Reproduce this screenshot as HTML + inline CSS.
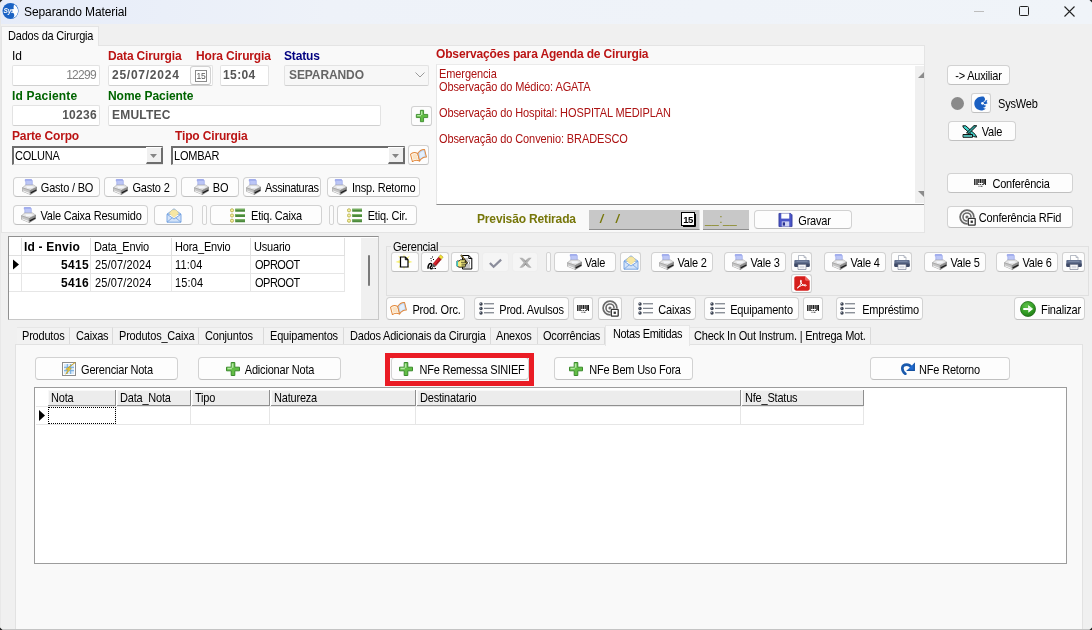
<!DOCTYPE html><html><head><meta charset="utf-8"><title>Separando Material</title><style>
*{box-sizing:border-box;margin:0;padding:0}
html,body{width:1092px;height:630px;overflow:hidden;background:#f0f0f0}
body{will-change:transform;font-family:"Liberation Sans",sans-serif;font-size:11px;letter-spacing:-0.2px;color:#000;position:relative}
.a{position:absolute;white-space:nowrap}
.t,.btn span{display:inline-block;transform:translateY(.5px) scaleY(1.13)}
.cell .t,.hd .t{transform:translateY(-.4px) scaleY(1.13)}
.tab .t,.st .t{transform:translateY(-.2px) scaleY(1.13)}
.b{font-weight:bold;font-size:12px;letter-spacing:-0.15px}
.red{color:#bb1414}.grn{color:#006400}.navy{color:#000080}.olv{color:#77770a}
.btn{position:absolute;background:#fdfdfd;border:1px solid #d2d2d2;border-bottom-color:#c0c0c0;border-radius:4px;white-space:nowrap;display:flex;align-items:center;justify-content:center;font-size:11px}
.btn svg{flex:none}
.inp{position:absolute;background:#fff;border:1px solid #e3e3e3;border-bottom-color:#d0d0d0;border-radius:2px;white-space:nowrap;line-height:17px;font-size:12px;letter-spacing:0}
.cmb{position:absolute;background:#fff;border:1px solid #e3e3e3;border-top:2px solid #6d6d6d;border-left:2px solid #6d6d6d;white-space:nowrap;line-height:15px;font-size:11px}
.sep{position:absolute;width:4px;border:1px solid #d4d4d4;border-radius:2px;background:#fbfbfb}
.tab{position:absolute;top:327px;height:17px;line-height:16px;padding-left:7px;border-right:1px solid #dadada;border-top:1px solid #e6e6e6;white-space:nowrap;background:#f2f2f2}
.hd{padding-top:1px;position:absolute;background:#f0f0f0;border-right:1px solid #a0a0a0;border-bottom:1px solid #a0a0a0;white-space:nowrap;padding-left:2px;line-height:16px}
.cell{padding-top:1px;position:absolute;border-right:1px solid #e6e6e6;border-bottom:1px solid #e6e6e6;white-space:nowrap;padding-left:3px;line-height:17px;background:#fff}
</style></head><body>
<svg width="0" height="0" style="position:absolute"><defs>
<symbol id="prn" viewBox="0 0 15 16"><path d="M3.200.6h6.300l.8 1v5.800H3.800V2.200h-.6z" fill="#bcc6f6" stroke="#94a1ea" stroke-width=".6" stroke-linejoin="round"/><path d="M3.200.6h6.300l.6 1H3.200z" fill="#8f9ce8"/><path d="M.3 8.800l3.500-2.900h7.600l3.400 2.300-6.500 3.200z" fill="#e4e4e4" stroke="#9c9c9c" stroke-width=".5" stroke-linejoin="round"/><path d="M4.200 7.200h6.100l1.300 1.400-6.200.7z" fill="#f5f7fc"/><path d="M.3 8.800l8 2.600v4.100l-8-3.300z" fill="#c6c6c6" stroke="#8c8c8c" stroke-width=".5" stroke-linejoin="round"/><path d="M1 11.400l6.600 2.500v1L1 12.300z" fill="#fbfbfb"/><path d="M8.300 11.400l6.500-3.200v3.500l-6.500 3.800z" fill="#909090" stroke="#707070" stroke-width=".5" stroke-linejoin="round"/><path d="M8.800 13.900l5.500-2.900" stroke="#1c1c1c" stroke-width="1.300"/></symbol>
<symbol id="prn2" viewBox="0 0 16 15"><path d="M4.500.5h5.500l2 2V6H4.500z" fill="#fff" stroke="#9aa0ad" stroke-width=".7"/><path d="M10 .5v2h2" fill="#d5d9e2" stroke="#9aa0ad" stroke-width=".6"/><path d="M1.500 5h13c.8 0 1.200.5 1.200 1.200v4.600c0 .7-.5 1.200-1.200 1.200h-13C.7 12 .3 11.500.3 10.800V6.200C.3 5.500.7 5 1.500 5z" fill="#5f6d8c"/><path d="M.3 8.500h15.400v2.300c0 .7-.5 1.200-1.200 1.200h-13C.7 12 .3 11.500.3 10.800z" fill="#3f4a66"/><path d="M2.500 6.300h11" stroke="#8c98b4" stroke-width=".8"/><path d="M4 9.500h8v5H4z" fill="#fff" stroke="#7b8296" stroke-width=".7"/><path d="M5.500 11.300h5M5.500 12.800h5" stroke="#b7bccb" stroke-width=".7"/></symbol>
<symbol id="lstg" viewBox="0 0 15 15"><circle cx="2" cy="2.300" r="1.600" fill="#f6f0a0" stroke="#a8a030" stroke-width=".7"/><circle cx="2" cy="7.500" r="1.600" fill="#f6f0a0" stroke="#a8a030" stroke-width=".7"/><circle cx="2" cy="12.700" r="1.600" fill="#f6f0a0" stroke="#a8a030" stroke-width=".7"/><path d="M5.200.8H15v3H5.200zM5.200 6H15v3H5.200zM5.200 11.200H15v3H5.200z" fill="#4c8a3c"/><path d="M5.200.8H15v1H5.200zM5.200 6H15v1H5.200zM5.200 11.200H15v1H5.200z" fill="#7fb86a"/></symbol>
<symbol id="lstd" viewBox="0 0 15 13"><circle cx="2" cy="2" r="1.700" fill="#3d4452"/><circle cx="2" cy="6.500" r="1.700" fill="#3d4452"/><circle cx="2" cy="11" r="1.700" fill="#3d4452"/><circle cx="1.500" cy="1.500" r=".6" fill="#aab2c2"/><circle cx="1.500" cy="6" r=".6" fill="#aab2c2"/><circle cx="1.500" cy="10.500" r=".6" fill="#aab2c2"/><path d="M5 1.800h10M5 6.300h10M5 10.800h10" stroke="#4c5260" stroke-width=".9"/></symbol>
<symbol id="mail" viewBox="0 0 16 15"><path d="M1 6.200L8 .8l7 5.400z" fill="#dbe8fa" stroke="#6f9fe0" stroke-width=".9" stroke-linejoin="round"/><path d="M3.500 5.500C4.500 2.500 6.500 1.800 8 1.800s3.500.7 4.500 3.700L8 9.500z" fill="#f7e7a3" stroke="#e3cd78" stroke-width=".4"/><path d="M1 6.200v8h14v-8L8 11z" fill="#d3e3f9" stroke="#6f9fe0" stroke-width=".9" stroke-linejoin="round"/><path d="M1 14.200l5.300-4.500M15 14.200L9.700 9.700" stroke="#6f9fe0" stroke-width=".8" fill="none"/></symbol>
<symbol id="plus" viewBox="0 0 16 16"><path d="M6.200 1.500h3.600v4.700h4.700v3.600H9.800v4.700H6.200V9.800H1.500V6.200h4.700z" fill="#62bd45" stroke="#3a8a2c" stroke-width="1" stroke-linejoin="round"/><path d="M6.800 2.500h1.600v4.300H6.800zM2.500 6.800h4.300v1.400H2.500z" fill="#b4e8a4"/></symbol>
<symbol id="book" viewBox="0 0 17 13"><g transform="rotate(-14 8.500 6.500) translate(.3 .3) scale(.96)"><path d="M.8 3.200Q4.500 1 8.300 4.300V12.300Q4.500 9.500.8 11.200z" fill="#fff7ea" stroke="#e2873a" stroke-width="1" stroke-linejoin="round"/><path d="M8.300 4.300Q12 .6 16.200 2V10Q12 8.800 8.300 12.300z" fill="#bcd6f5" stroke="#e2873a" stroke-width="1" stroke-linejoin="round"/><path d="M2.300 4.200Q5 3.200 7 5.300V10.300Q5 8.600 2.300 9.400z" fill="#fbe3c4"/><path d="M9.800 5Q12.500 2.500 14.800 3.200V8.600Q12.500 8.200 9.800 10.300z" fill="#e3effc"/></g></symbol>
<symbol id="flop" viewBox="0 0 16 16"><path d="M1 1h12.500L15 2.500V15H1z" fill="#4a55c8" stroke="#2a3190" stroke-width=".8"/><path d="M3.500 1h8.500v5.500H3.500z" fill="#fff"/><path d="M4 9.500h8V15H4z" fill="#cfd3f3"/><path d="M5 10.500h2.500v3.500H5z" fill="#2a3190"/></symbol>
<symbol id="barc" viewBox="0 0 12 8"><path d="M.8 0v6M3 0v6M10 0v6M11.600 0v6" stroke="#1a1a1a" stroke-width="1.400"/><path d="M4.800 0v4M6.500 0v4M8.200 0v4" stroke="#1a1a1a" stroke-width="1.200"/><path d="M4.200 5.500h1.200M6 5.500h1M7.800 5.500h1.200M4.500 7.300h1M6.500 7.300h2" stroke="#444" stroke-width="1"/></symbol>
<symbol id="rfid" viewBox="0 0 17 17"><circle cx="8" cy="8" r="6.900" fill="none" stroke="#6a6a6a" stroke-width="1.700"/><circle cx="8" cy="8" r="4" fill="none" stroke="#6a6a6a" stroke-width="1.600"/><circle cx="8" cy="8" r="1.600" fill="#6a6a6a"/><rect x="8.500" y="8.500" width="8" height="8" rx=".8" fill="#fff"/><rect x="9.300" y="9.300" width="6.900" height="6.900" rx=".6" fill="#fff" stroke="#333" stroke-width="1.300"/><rect x="11.600" y="11.600" width="2.300" height="2.300" fill="#333"/></symbol>
<symbol id="go" viewBox="0 0 16 16"><defs><radialGradient id="gg" cx=".4" cy=".3" r=".8"><stop offset="0" stop-color="#5fc14a"/><stop offset=".6" stop-color="#2f9a22"/><stop offset="1" stop-color="#1d6f14"/></radialGradient></defs><circle cx="8" cy="8" r="7.500" fill="url(#gg)" stroke="#1e6b16" stroke-width=".8"/><path d="M3.300 6.900h5V4.200L13 8l-4.700 3.800V9.100h-5z" fill="#fff"/><path d="M3.300 6.900h5V4.200L13 8z" fill="#e4f6df"/></symbol>
<symbol id="redo" viewBox="0 0 15 13"><path d="M5.300 11.800C1.300 8.500 1 2.600 6.800 2.600c2.200 0 3.400 1 4.400 2.500" fill="none" stroke="#1a5aad" stroke-width="2.700" stroke-linecap="round"/><path d="M14.800.5V9H6.300z" fill="#1f6ad0"/><path d="M14.800 9H6.300l1.500-1.300h5.800V2.200L14.800.5z" fill="#15509f"/></symbol>
<symbol id="note" viewBox="0 0 14 14"><rect x=".5" y=".5" width="13" height="13" fill="#fdfdfd" stroke="#8c8c8c"/><rect x="2" y="2" width="10" height="10" fill="#d9eafa"/><path d="M2 5.300h10M2 8.700h10M5.300 2v10M8.700 2v10" stroke="#6fa9de" stroke-width="1"/><path d="M13.300.3L6 6.200h3.200L3.800 12.300l2.600-5H3.800z" fill="#f7dc3c" stroke="#c99a10" stroke-width=".6" stroke-linejoin="round"/></symbol>
<symbol id="pdf" viewBox="0 0 16 15"><path d="M2.500.3H11l4.700 4.500v7.700c0 1.300-.9 2.200-2.200 2.200h-11C1.200 14.700.3 13.800.3 12.500v-10C.3 1.200 1.200.3 2.500.3z" fill="#d61f1c"/><path d="M11 .3l4.700 4.500h-3.200c-.9 0-1.500-.6-1.500-1.500z" fill="#f0625e"/><path d="M3.300 12c1.600-.6 3.600-3.600 4.100-6.400.3-1.700-.9-2-1-.7-.1 1.900 2.400 4.700 4.800 5 1.400.2 1.500-1 .2-1.100-2.400-.2-5.900 1.300-8.100 3.200z" fill="none" stroke="#fff" stroke-width="1"/></symbol>
<symbol id="newd" viewBox="0 0 18 16"><path d="M9 0l1.300 4.500L15 1.500l-2.700 4.200L17.500 8l-5.200 1.500 2.200 4.500-4.500-2.500L9 16l-1-4.500L3.500 14l2.200-4.500L.5 8l5.200-2.300L3 1.500l4.700 3z" fill="#f9f27a"/><path d="M5.500 3h4.800L13 5.700V13H5.500z" fill="#fff" stroke="#000" stroke-width="1.200" stroke-linejoin="miter"/><path d="M10.300 3v2.700H13" fill="none" stroke="#000" stroke-width="1"/></symbol>
<symbol id="edt" viewBox="0 0 18 16"><path d="M14.500.8l2.700 2.200-2 2.500-2.700-2.200z" fill="#f3e23a" stroke="#8a7a10" stroke-width=".4"/><path d="M12.500 3.300l2.700 2.200-5.500 6.500L7 9.800z" fill="#d8202a" stroke="#7a1015" stroke-width=".5"/><path d="M12.800 4.500l1.300 1-4.600 5.400" stroke="#8e0f16" stroke-width=".9" fill="none"/><path d="M7 9.800l2.700 2.200-1 1.200-2.600-.4z" fill="#555"/><path d="M2.200 14.800c-.6-2.300.6-5.300 2.400-5.300 1.900 0 1.300 2.300 0 3.300-1.300 1.100.4 2.400 2 1.500" fill="none" stroke="#000" stroke-width="1.500"/><path d="M6.300 13.300l1 1.600M8.500 14.500h1.500M4.500 4.500h1M6 3h1M4.800 6.800h1M7 5.500h1" stroke="#000" stroke-width="1"/></symbol>
<symbol id="cpy" viewBox="0 0 18 16"><path d="M6.500 1.500h6.300l3 3V15H6.500z" fill="#fff" stroke="#000" stroke-width="1"/><path d="M12.800 1.500v3h3" fill="none" stroke="#000" stroke-width="1"/><path d="M8.500 5h3M8.500 7h5.500M11 9h3M9.500 11h4.500M8.500 13h5.500" stroke="#222" stroke-width="1" stroke-dasharray="1 1"/><path d="M5.500.8l6 8-.8.700-6-8z" fill="#e9c23a" stroke="#000" stroke-width=".6"/><path d="M1 7h2l1.500-1.200h4.500l.8 1.200-1 1 1.500.8v1.500l-1.200.5.400 1.200-1 1.200H3L1 12z" fill="#f4ea7c" stroke="#000" stroke-width=".8" stroke-linejoin="round"/><path d="M.5 7h1.500v5.500H.5z" fill="#3fc7c0"/><path d="M5 8.300h4M5.500 10.200h4M5.500 12h3" stroke="#000" stroke-width=".6"/></symbol>
<symbol id="chk" viewBox="0 0 16 16"><path d="M2 8.500l4 4 8-7.500" fill="none" stroke="#8b8d9b" stroke-width="2.400"/></symbol>
<symbol id="xx" viewBox="0 0 16 16"><path d="M1.500 3h3L8 6.500 11.500 3h3L10 8.200l4.500 5.300h-3L8 9.800 4.500 13.500h-3L6 8.200z" fill="#b2b2b2"/><path d="M5 3l3 3 3-3-3 4.500zM5 13.500l3-3.200 3 3.200-3-5z" fill="#8c8c8c"/></symbol>
<symbol id="cal" viewBox="0 0 12 12"><rect x=".5" y=".5" width="11" height="11" fill="#fff" stroke="#8a8a8a" stroke-width="1"/><text x="6" y="9.200" font-size="8.500" text-anchor="middle" font-family="Liberation Sans" fill="#555" letter-spacing="-.3">15</text></symbol>
<symbol id="valei" viewBox="0 0 16 13"><path d="M.8.800h3l9.500 8.700 1.500 2.700-3-.6L1.500 2.800z" fill="#3fd0c8" stroke="#000" stroke-width=".9" stroke-linejoin="round"/><path d="M12 .6l2.800.2L7 8.500 4.500 7.800z" fill="#2aa39c" stroke="#000" stroke-width=".9" stroke-linejoin="round"/><path d="M1 9.500h9.500v2.800H1z" fill="#7fe3dc" stroke="#000" stroke-width=".9"/><path d="M2 10.900h7.500" stroke="#1d8f88" stroke-width=".8"/></symbol>
<symbol id="sysw" viewBox="0 0 14 15"><path d="M9.500.6C5 -.3 .5 2.800.3 7.300c-.2 4.700 4 8 8.700 7 1.500-.4 2.200-1 2.800-1.700-1.300.1-2.200-.3-2.600-1 1.300-.3 2.500-1 3-2.200-1 .2-1.700 0-2.200-.4 1.600-.6 2.500-1.700 3.500-1.400C13.600 6.800 13 6.300 12.500 6c.7-.7.800-1.500.6-2.200-.9.900-2 1.200-2.800.9.900-.9 1.300-2.200-.8-4.100z" fill="#1b60c2"/><circle cx="8.500" cy="7.300" r="1.400" fill="#fff"/><path d="M9.500 5.800l2-.8M9.800 8.300l1.600.5" stroke="#fff" stroke-width=".8"/></symbol>
</defs></svg>
<div class="a" style="left:0;top:0;width:1092px;height:24px;background:linear-gradient(90deg,#e6ecf9 0,#eef2f9 30%,#f0f4f9 100%)"></div>
<svg class="a" style="left:2px;top:2px" width="18" height="18" viewBox="0 0 18 18"><circle cx="8.500" cy="9" r="8" fill="#1b63c4"/><path d="M12 2.500c2.500 1.500 4.500 4 4 7.500s-3 5.500-5 6c2-2 1.500-4 0-5.500s1.500-3 .5-5z" fill="#fff"/><text x="1.500" y="11" font-size="6.500" font-weight="bold" font-family="Liberation Sans" fill="#fff" font-style="italic">Sys</text></svg>
<div class="a " style="left:24px;top:5px;font-size:12px;letter-spacing:-0.1px;line-height:15px">Separando Material</div>
<div class="a" style="left:974px;top:11px;width:10px;height:1px;background:#bdbdbd"></div>
<div class="a" style="left:1019px;top:6px;width:10px;height:10px;border:1px solid #222;border-radius:1.500px"></div>
<svg class="a" style="left:1064px;top:6px" width="11" height="11" viewBox="0 0 11 11"><path d="M.5.5l10 10M10.500.5l-10 10" stroke="#222" stroke-width="1.100"/></svg>
<div class="a" style="left:1px;top:45px;width:924px;height:188px;background:#f9f9f9;border:1px solid #e4e4e4"></div>
<div class="a" style="left:1px;top:26px;width:98px;height:20px;background:#f9f9f9;border:1px solid #e4e4e4;border-bottom:none"></div>
<div class="a " style="left:8px;top:28px;line-height:14px"><span class="t">Dados da Cirurgia</span></div>
<div class="a " style="left:12px;top:49px;font-size:12px;letter-spacing:0;line-height:14px">Id</div>
<div class="a b red" style="left:108px;top:49px;line-height:14px">Data Cirurgia</div>
<div class="a b red" style="left:196px;top:49px;line-height:14px">Hora Cirurgia</div>
<div class="a b navy" style="left:284px;top:49px;line-height:14px">Status</div>
<div class="a b red" style="left:436px;top:47px;line-height:14px">Observações para Agenda de Cirurgia</div>
<div class="inp" style="left:12px;top:65px;width:88px;height:21px;line-height:19px;text-align:right;padding-right:2px;color:#808080;font-size:12px;letter-spacing:-0.7px;padding-right:3px">12299</div>
<div class="inp" style="left:108px;top:65px;width:105px;height:21px;line-height:19px;padding-left:3px;color:#555;font-weight:bold;letter-spacing:.75px">25/07/2024</div>
<div class="btn" style="left:190px;top:66px;width:21px;height:19px;border-radius:3px"><svg width="12" height="12" style=""><use href="#cal"/></svg></div>
<div class="inp" style="left:220px;top:65px;width:49px;height:21px;line-height:19px;padding-left:2px;color:#555;font-weight:bold;letter-spacing:.4px">15:04</div>
<div class="inp" style="left:284px;top:65px;width:145px;height:21px;line-height:19px;padding-left:4px;color:#666;font-weight:bold;letter-spacing:-.1px;background:#f7f7f7">SEPARANDO</div>
<svg class="a" style="left:415px;top:72px" width="10" height="6" viewBox="0 0 10 6"><path d="M.5.5L5 5 9.500.5" fill="none" stroke="#9a9a9a" stroke-width="1"/></svg>
<div class="a b grn" style="left:12px;top:89px;line-height:14px;letter-spacing:.18px">Id Paciente</div>
<div class="a b grn" style="left:108px;top:89px;line-height:14px;letter-spacing:-.05px">Nome Paciente</div>
<div class="inp" style="left:12px;top:105px;width:88px;height:21px;text-align:right;padding-right:2px;color:#555;font-weight:bold;line-height:19px;letter-spacing:.3px">10236</div>
<div class="inp" style="left:108px;top:105px;width:273px;height:21px;padding-left:3px;color:#555;font-weight:bold;letter-spacing:.2px;line-height:19px">EMULTEC</div>
<div class="btn" style="left:411px;top:106px;width:21px;height:20px;border-radius:3px"><svg width="14" height="14" style=""><use href="#plus"/></svg></div>
<div class="a b red" style="left:12px;top:129px;line-height:14px">Parte Corpo</div>
<div class="a b red" style="left:175px;top:129px;line-height:14px">Tipo Cirurgia</div>
<div class="cmb" style="left:12px;top:146px;width:151px;height:19px;padding-left:1px"><span class="t">COLUNA</span></div>
<div class="cmb" style="left:171px;top:146px;width:234px;height:19px;padding-left:1px"><span class="t">LOMBAR</span></div>
<div class="a" style="left:146px;top:147px;width:17px;height:17px;background:#f0f0f0;border:1px solid #fff;border-right:2px solid #6d6d6d;border-bottom:2px solid #6d6d6d"></div>
<svg class="a" style="left:150px;top:154px" width="7" height="4" viewBox="0 0 7 4"><path d="M0 0h7L3.500 4z" fill="#858585"/></svg>
<div class="a" style="left:388px;top:147px;width:17px;height:17px;background:#f0f0f0;border:1px solid #fff;border-right:2px solid #6d6d6d;border-bottom:2px solid #6d6d6d"></div>
<svg class="a" style="left:392px;top:154px" width="7" height="4" viewBox="0 0 7 4"><path d="M0 0h7L3.500 4z" fill="#858585"/></svg>
<div class="btn" style="left:408px;top:145px;width:21px;height:20px;border-radius:3px"><svg width="17" height="13" style=""><use href="#book"/></svg></div>
<div class="btn" style="left:13px;top:177px;width:87px;height:20px;"><svg width="15" height="16" style="margin-left:2px;margin-right:4px"><use href="#prn"/></svg><span>Gasto / BO</span></div>
<div class="btn" style="left:104px;top:177px;width:73px;height:20px;"><svg width="15" height="16" style="margin-left:2px;margin-right:4px"><use href="#prn"/></svg><span>Gasto 2</span></div>
<div class="btn" style="left:181px;top:177px;width:58px;height:20px;"><svg width="15" height="16" style="margin-left:2px;margin-right:4px"><use href="#prn"/></svg><span>BO</span></div>
<div class="btn" style="left:243px;top:177px;width:78px;height:20px;justify-content:flex-start;padding-left:2px"><svg width="15" height="16" style="margin-right:4px"><use href="#prn"/></svg><span style="letter-spacing:-.35px">Assinaturas</span></div>
<div class="btn" style="left:327px;top:177px;width:93px;height:20px;justify-content:flex-start;padding-left:4px"><svg width="15" height="16" style="margin-right:5px"><use href="#prn"/></svg><span>Insp. Retorno</span></div>
<div class="btn" style="left:13px;top:205px;width:135px;height:20px;"><svg width="15" height="16" style="margin-left:2px;margin-right:4px"><use href="#prn"/></svg><span>Vale Caixa Resumido</span></div>
<div class="btn" style="left:154px;top:205px;width:39px;height:20px;"><svg width="16" height="15" style=""><use href="#mail"/></svg></div>
<div class="sep" style="left:202px;top:205px;height:20px;width:5px"></div>
<div class="btn" style="left:210px;top:205px;width:112px;height:20px;"><svg width="15" height="15" style="margin-right:6px"><use href="#lstg"/></svg><span>Etiq. Caixa</span></div>
<div class="sep" style="left:329px;top:205px;height:20px;width:5px"></div>
<div class="btn" style="left:337px;top:205px;width:80px;height:20px;"><svg width="15" height="15" style="margin-right:6px"><use href="#lstg"/></svg><span>Etiq. Cir.</span></div>
<div class="a" style="left:436px;top:64px;width:488px;height:141px;background:#fff;border-top:1px solid #ebebeb;border-left:1px solid #e6e6e6;border-bottom:1px solid #8c8c8c"></div>
<div class="a" style="left:439px;top:67px;line-height:13px;color:#ac1212;letter-spacing:-0.1px"><span class="t">Emergencia</span></div>
<div class="a" style="left:439px;top:80px;line-height:13px;color:#ac1212;letter-spacing:-0.1px"><span class="t">Observação do Médico: AGATA</span></div>
<div class="a" style="left:439px;top:106px;line-height:13px;color:#ac1212;letter-spacing:-0.1px"><span class="t">Observação do Hospital: HOSPITAL MEDIPLAN</span></div>
<div class="a" style="left:439px;top:132px;line-height:13px;color:#ac1212;letter-spacing:-0.1px"><span class="t">Observação do Convenio: BRADESCO</span></div>
<div class="a" style="left:915px;top:66px;width:9px;height:137px;background:#f0f0f0"></div>
<svg class="a" style="left:918px;top:72px" width="6" height="6" viewBox="0 0 6 6"><path d="M0 6h6V0z" fill="#8c8c8c"/></svg>
<svg class="a" style="left:918px;top:191px" width="6" height="6" viewBox="0 0 6 6"><path d="M0 0h6v6z" fill="#8c8c8c"/></svg>
<div class="a b olv" style="left:477px;top:212px;line-height:14px">Previsão Retirada</div>
<div class="a" style="left:589px;top:210px;width:111px;height:20px;background:#c8c8c8;border-bottom:1px solid #8e8e8e;border-right:1px solid #dedede"></div>
<div class="a b olv" style="left:600px;top:212px;line-height:14px;font-style:italic;letter-spacing:.6px">/&nbsp;&nbsp;&nbsp;/</div>
<svg class="a" style="left:681px;top:212px" width="15" height="15" viewBox="0 0 15 15"><rect x=".5" y=".5" width="13" height="13" fill="#fff" stroke="#000"/><path d="M14.500 2v12.500H2" fill="none" stroke="#000"/><text x="7" y="11" font-size="9.500" font-weight="bold" text-anchor="middle" font-family="Liberation Sans" fill="#000" letter-spacing="-.5">15</text></svg>
<div class="a" style="left:703px;top:210px;width:46px;height:20px;background:#c8c8c8;border-bottom:1px solid #8e8e8e"></div>
<div class="a olv" style="left:705px;top:212px;line-height:14px;font-size:12px;letter-spacing:.4px;color:#8a8a2a">__:__</div>
<div class="btn" style="left:754px;top:210px;width:98px;height:19px;padding-left:3px"><svg width="15" height="16" style="margin-right:5px"><use href="#flop"/></svg><span>Gravar</span></div>
<div class="btn" style="left:947px;top:65px;width:63px;height:20px;"><span>-&gt; Auxiliar</span></div>
<div class="a" style="left:951px;top:97px;width:13px;height:13px;border-radius:50%;background:#8a8a8a"></div>
<div class="btn" style="left:971px;top:93px;width:20px;height:20px;border-radius:3px"><svg width="14" height="15" style=""><use href="#sysw"/></svg></div>
<div class="a " style="left:998px;top:97px;line-height:13px"><span class="t">SysWeb</span></div>
<div class="btn" style="left:948px;top:121px;width:68px;height:20px;"><svg width="16" height="13" style="margin-right:4px"><use href="#valei"/></svg><span>Vale</span></div>
<div class="btn" style="left:947px;top:173px;width:126px;height:20px;padding-left:4px"><svg width="12" height="8" style="margin-right:6px"><use href="#barc"/></svg><span>Conferência</span></div>
<div class="btn" style="left:947px;top:206px;width:126px;height:22px;"><svg width="17" height="17" style="margin-right:3px"><use href="#rfid"/></svg><span>Conferência RFid</span></div>
<div class="a" style="left:8px;top:236px;width:371px;height:84px;background:#fff;border:1px solid #8f8f8f;border-right-color:#c8c8c8;border-bottom-color:#c8c8c8"></div>
<div class="a" style="left:361px;top:238px;width:17px;height:81px;background:#f0f0f0"></div>
<div class="a" style="left:368px;top:255px;width:2px;height:31px;background:#7a7a7a;border-radius:1px"></div>
<div class="hd" style="left:9px;top:238px;width:13px;height:18px;background:#fff;border-color:#e0e0e0;"></div>
<div class="hd" style="left:22px;top:238px;width:69px;height:18px;background:#fff;border-color:#e0e0e0;font-weight:bold;font-size:12px;letter-spacing:.2px">Id - Envio</div>
<div class="hd" style="left:91px;top:238px;width:81px;height:18px;background:#fff;border-color:#e0e0e0;padding-left:3px"><span class="t">Data_Envio</span></div>
<div class="hd" style="left:172px;top:238px;width:79px;height:18px;background:#fff;border-color:#e0e0e0;padding-left:3px"><span class="t">Hora_Envio</span></div>
<div class="hd" style="left:251px;top:238px;width:94px;height:18px;background:#fff;border-color:#e0e0e0;padding-left:3px"><span class="t">Usuario</span></div>
<div class="cell" style="left:9px;top:256px;width:13px;height:18px;background:#fff"></div>
<div class="cell" style="left:22px;top:256px;width:69px;height:18px;font-weight:bold;font-size:12px;letter-spacing:.3px;text-align:right;padding-right:1px;padding-left:0">5415</div>
<div class="cell" style="left:91px;top:256px;width:81px;height:18px;padding-left:4px;letter-spacing:.15px"><span class="t">25/07/2024</span></div>
<div class="cell" style="left:172px;top:256px;width:79px;height:18px;padding-left:3px;letter-spacing:.15px"><span class="t">11:04</span></div>
<div class="cell" style="left:251px;top:256px;width:94px;height:18px;padding-left:4px;letter-spacing:-.5px"><span class="t">OPROOT</span></div>
<div class="cell" style="left:9px;top:274px;width:13px;height:18px;background:#fff"></div>
<div class="cell" style="left:22px;top:274px;width:69px;height:18px;font-weight:bold;font-size:12px;letter-spacing:.3px;text-align:right;padding-right:1px;padding-left:0">5416</div>
<div class="cell" style="left:91px;top:274px;width:81px;height:18px;padding-left:4px;letter-spacing:.15px"><span class="t">25/07/2024</span></div>
<div class="cell" style="left:172px;top:274px;width:79px;height:18px;padding-left:3px;letter-spacing:.15px"><span class="t">15:04</span></div>
<div class="cell" style="left:251px;top:274px;width:94px;height:18px;padding-left:4px;letter-spacing:-.5px"><span class="t">OPROOT</span></div>
<svg class="a" style="left:13px;top:259px" width="6" height="11" viewBox="0 0 6 10"><path d="M0 0l6 5-6 5z" fill="#000"/></svg>
<div class="a" style="left:386px;top:246px;width:703px;height:50px;border:1px solid #e0e0e0"></div>
<div class="a" style="left:391px;top:240px;padding:0 2px;background:#f0f0f0;line-height:13px"><span class="t">Gerencial</span></div>
<div class="btn" style="left:391px;top:252px;width:28px;height:20px;border-radius:3px"><svg width="18" height="16" style="margin-left:-2px"><use href="#newd"/></svg></div>
<div class="btn" style="left:421px;top:252px;width:28px;height:20px;border-radius:3px"><svg width="18" height="16" style=""><use href="#edt"/></svg></div>
<div class="btn" style="left:451px;top:252px;width:28px;height:20px;border-radius:3px"><svg width="18" height="16" style=""><use href="#cpy"/></svg></div>
<div class="btn" style="left:482px;top:252px;width:27px;height:20px;border-radius:3px;background:#f5f5f5;border-color:#eeeeee"><svg width="15" height="15" style=""><use href="#chk"/></svg></div>
<div class="btn" style="left:512px;top:252px;width:26px;height:20px;border-radius:3px;background:#f5f5f5;border-color:#eeeeee"><svg width="15" height="15" style=""><use href="#xx"/></svg></div>
<div class="sep" style="left:546px;top:252px;height:20px;width:5px"></div>
<div class="btn" style="left:554px;top:252px;width:62px;height:20px;"><svg width="15" height="16" style="margin-left:2px;margin-right:3px"><use href="#prn"/></svg><span>Vale</span></div>
<div class="btn" style="left:620px;top:252px;width:21px;height:20px;border-radius:3px"><svg width="16" height="15" style=""><use href="#mail"/></svg></div>
<div class="btn" style="left:651px;top:252px;width:62px;height:20px;"><svg width="15" height="16" style="margin-left:2px;margin-right:3px"><use href="#prn"/></svg><span>Vale 2</span></div>
<div class="btn" style="left:724px;top:252px;width:62px;height:20px;"><svg width="15" height="16" style="margin-left:2px;margin-right:3px"><use href="#prn"/></svg><span>Vale 3</span></div>
<div class="btn" style="left:791px;top:252px;width:21px;height:20px;border-radius:3px"><svg width="16" height="15" style=""><use href="#prn2"/></svg></div>
<div class="btn" style="left:824px;top:252px;width:62px;height:20px;"><svg width="15" height="16" style="margin-left:2px;margin-right:3px"><use href="#prn"/></svg><span>Vale 4</span></div>
<div class="btn" style="left:891px;top:252px;width:21px;height:20px;border-radius:3px"><svg width="16" height="15" style=""><use href="#prn2"/></svg></div>
<div class="btn" style="left:924px;top:252px;width:62px;height:20px;"><svg width="15" height="16" style="margin-left:2px;margin-right:3px"><use href="#prn"/></svg><span>Vale 5</span></div>
<div class="btn" style="left:996px;top:252px;width:62px;height:20px;"><svg width="15" height="16" style="margin-left:2px;margin-right:3px"><use href="#prn"/></svg><span>Vale 6</span></div>
<div class="btn" style="left:1062px;top:252px;width:23px;height:20px;border-radius:3px"><svg width="16" height="15" style=""><use href="#prn2"/></svg></div>
<div class="btn" style="left:791px;top:274px;width:21px;height:19px;border-radius:3px"><svg width="16" height="15" style=""><use href="#pdf"/></svg></div>
<div class="btn" style="left:386px;top:297px;width:79px;height:23px;"><svg width="17" height="13" style="margin-right:5px"><use href="#book"/></svg><span>Prod. Orc.</span></div>
<div class="btn" style="left:474px;top:297px;width:95px;height:23px;"><svg width="15" height="13" style="margin-right:5px"><use href="#lstd"/></svg><span>Prod. Avulsos</span></div>
<div class="btn" style="left:573px;top:297px;width:20px;height:23px;border-radius:3px"><svg width="12" height="8" style=""><use href="#barc"/></svg></div>
<div class="btn" style="left:598px;top:297px;width:24px;height:23px;border-radius:3px"><svg width="17" height="17" style=""><use href="#rfid"/></svg></div>
<div class="btn" style="left:633px;top:297px;width:63px;height:23px;"><svg width="15" height="13" style="margin-right:5px"><use href="#lstd"/></svg><span>Caixas</span></div>
<div class="btn" style="left:704px;top:297px;width:95px;height:23px;"><svg width="15" height="13" style="margin-right:5px"><use href="#lstd"/></svg><span>Equipamento</span></div>
<div class="btn" style="left:803px;top:297px;width:20px;height:23px;border-radius:3px"><svg width="12" height="8" style=""><use href="#barc"/></svg></div>
<div class="btn" style="left:836px;top:297px;width:87px;height:23px;"><svg width="15" height="13" style="margin-right:7px"><use href="#lstd"/></svg><span>Empréstimo</span></div>
<div class="btn" style="left:1014px;top:297px;width:71px;height:23px;padding-left:2px"><svg width="16" height="16" style="margin-right:5px"><use href="#go"/></svg><span>Finalizar</span></div>
<div class="a" style="left:15px;top:344px;width:1068px;height:286px;background:#f9f9f9;border:1px solid #e2e2e2"></div>
<div class="tab" style="left:17px;width:53px;padding-left:5px"><span class="t">Produtos</span></div>
<div class="tab" style="left:70px;width:43px;padding-left:6px"><span class="t">Caixas</span></div>
<div class="tab" style="left:113px;width:86px;padding-left:6px"><span class="t">Produtos_Caixa</span></div>
<div class="tab" style="left:199px;width:65px;padding-left:6px"><span class="t">Conjuntos</span></div>
<div class="tab" style="left:264px;width:80px;padding-left:6px"><span class="t">Equipamentos</span></div>
<div class="tab" style="left:344px;width:147px;padding-left:6px"><span class="t">Dados Adicionais da Cirurgia</span></div>
<div class="tab" style="left:491px;width:47px;padding-left:5px"><span class="t">Anexos</span></div>
<div class="tab" style="left:538px;width:67px;padding-left:5px"><span class="t">Ocorrências</span></div>
<div class="tab" style="left:690px;width:181px;padding-left:4px"><span class="t">Check In Out Instrum. | Entrega Mot.</span></div>
<div class="a st" style="left:605px;top:325px;width:85px;height:21px;background:#f9f9f9;border:1px solid #e6e6e6;border-bottom:none;padding-left:7px;line-height:17px"><span class="t" style="letter-spacing:-.35px">Notas Emitidas</span></div>
<div class="btn" style="left:35px;top:357px;width:143px;height:23px;padding-left:2px"><svg width="14" height="14" style="margin-right:5px"><use href="#note"/></svg><span>Gerenciar Nota</span></div>
<div class="btn" style="left:198px;top:357px;width:143px;height:23px;"><svg width="16" height="16" style="margin-right:4px"><use href="#plus"/></svg><span>Adicionar Nota</span></div>
<div class="btn" style="left:391px;top:357px;width:138px;height:23px;padding-left:3px"><svg width="16" height="16" style="margin-right:5px"><use href="#plus"/></svg><span>NFe Remessa SINIEF</span></div>
<div class="a" style="left:385px;top:353px;width:149px;height:33px;border:5px solid #ea1c25"></div>
<div class="btn" style="left:554px;top:357px;width:139px;height:23px;padding-left:2px"><svg width="16" height="16" style="margin-right:5px"><use href="#plus"/></svg><span>NFe Bem Uso Fora</span></div>
<div class="btn" style="left:870px;top:357px;width:140px;height:23px;"><svg width="15" height="13" style="margin-right:4px"><use href="#redo"/></svg><span>NFe Retorno</span></div>
<div class="a" style="left:34px;top:387px;width:1033px;height:177px;background:#fff;border:1px solid #9c9c9c"></div>
<div class="a" style="left:36px;top:406px;width:828px;height:1px;background:#e9e9e9"></div>
<div class="hd" style="left:48px;top:390px;width:68px;height:16px;padding-left:3px;padding-top:0;background:#ececec;border-right:1px solid #8f8f8f;border-bottom:1px solid #8f8f8f;box-shadow:inset 1px 1px 0 #f8f8f8"><span class="t">Nota</span></div>
<div class="cell" style="left:48px;top:407px;width:68px;height:18px;background:#fff;border-color:#e6e6e6"></div>
<div class="hd" style="left:117px;top:390px;width:74px;height:16px;padding-left:3px;padding-top:0;background:#ececec;border-right:1px solid #8f8f8f;border-bottom:1px solid #8f8f8f;box-shadow:inset 1px 1px 0 #f8f8f8"><span class="t">Data_Nota</span></div>
<div class="cell" style="left:116px;top:407px;width:75px;height:18px;background:#fff;border-color:#e6e6e6"></div>
<div class="hd" style="left:192px;top:390px;width:78px;height:16px;padding-left:3px;padding-top:0;background:#ececec;border-right:1px solid #8f8f8f;border-bottom:1px solid #8f8f8f;box-shadow:inset 1px 1px 0 #f8f8f8"><span class="t">Tipo</span></div>
<div class="cell" style="left:191px;top:407px;width:79px;height:18px;background:#fff;border-color:#e6e6e6"></div>
<div class="hd" style="left:271px;top:390px;width:145px;height:16px;padding-left:3px;padding-top:0;background:#ececec;border-right:1px solid #8f8f8f;border-bottom:1px solid #8f8f8f;box-shadow:inset 1px 1px 0 #f8f8f8"><span class="t">Natureza</span></div>
<div class="cell" style="left:270px;top:407px;width:146px;height:18px;background:#fff;border-color:#e6e6e6"></div>
<div class="hd" style="left:417px;top:390px;width:324px;height:16px;padding-left:3px;padding-top:0;background:#ececec;border-right:1px solid #8f8f8f;border-bottom:1px solid #8f8f8f;box-shadow:inset 1px 1px 0 #f8f8f8"><span class="t">Destinatario</span></div>
<div class="cell" style="left:416px;top:407px;width:325px;height:18px;background:#fff;border-color:#e6e6e6"></div>
<div class="hd" style="left:742px;top:390px;width:122px;height:16px;padding-left:3px;padding-top:0;background:#ececec;border-right:1px solid #8f8f8f;border-bottom:1px solid #8f8f8f;box-shadow:inset 1px 1px 0 #f8f8f8"><span class="t">Nfe_Status</span></div>
<div class="cell" style="left:741px;top:407px;width:123px;height:18px;background:#fff;border-color:#e6e6e6"></div>
<div class="a" style="left:36px;top:424px;width:12px;height:1px;background:#e6e6e6"></div>
<svg class="a" style="left:39px;top:410px" width="6" height="11" viewBox="0 0 6 11"><path d="M0 0l6 5.500-6 5.500z" fill="#000"/></svg>
<div class="a" style="left:48px;top:407px;width:68px;height:17px;border:1px dotted #000"></div>
<div class="a" style="left:0;top:0;width:1px;height:630px;background:#e8e8e8"></div>
<div class="a" style="left:0;top:629px;width:1092px;height:1px;background:#c4c4c4"></div>
<svg class="a" style="left:0;top:0" width="3" height="3"><path d="M0 0h2.500L0 2.500z" fill="#222"/></svg><svg class="a" style="left:1089px;top:0" width="3" height="3"><path d="M3 0H.5L3 2.500z" fill="#222"/></svg><svg class="a" style="left:0;top:627px" width="3" height="3"><path d="M0 3h2.500L0 .5z" fill="#222"/></svg><svg class="a" style="left:1089px;top:627px" width="3" height="3"><path d="M3 3H.5L3 .5z" fill="#222"/></svg>
</body></html>
